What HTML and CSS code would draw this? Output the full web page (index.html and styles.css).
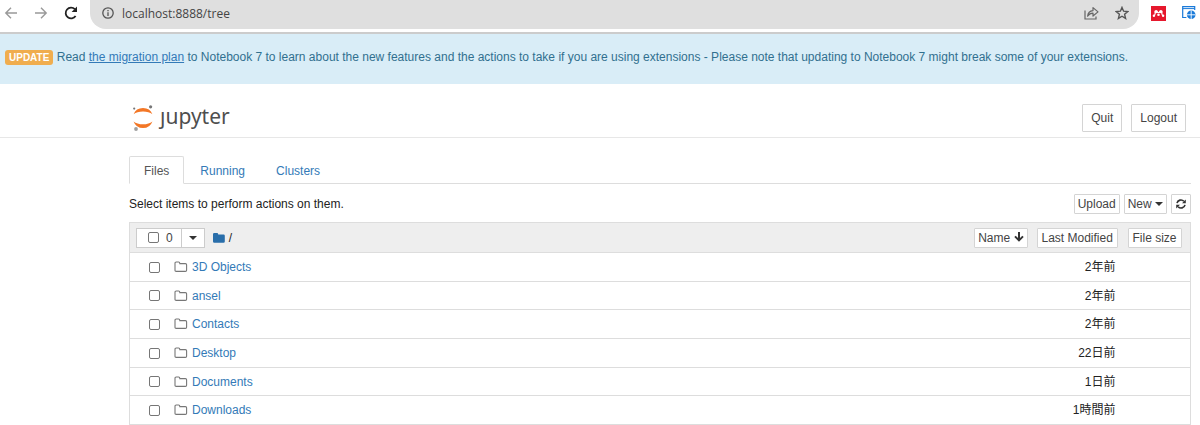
FILE: index.html
```html
<!DOCTYPE html>
<html lang="en">
<head>
    <meta charset="UTF-8">
    <title>Home Page - Select or create a notebook</title>
    <link rel="stylesheet" href="styles.css">
</head>
<body>
    <svg class="defs" width="0" height="0" aria-hidden="true">
        <symbol id="folder" viewBox="0 0 14 12">
            <path d="M1 2.2Q1 1 2.2 1H4.6Q5.8 1 5.8 2.2V2.6H11.4Q12.6 2.6 12.6 3.8V9.2Q12.6 10.4 11.4 10.4H2.2Q1 10.4 1 9.2Z" fill="none" stroke="#777" stroke-width="1.1"/>
        </symbol>
    </svg>

    <div class="browser-bar">
        <button class="nav-btn" aria-label="Back">
            <svg width="14" height="14" viewBox="0 0 14 14" fill="none" stroke="#999" stroke-width="1.4"><path d="M13 7H2M7 1.8L1.8 7L7 12.2"/></svg>
        </button>
        <button class="nav-btn" aria-label="Forward">
            <svg width="14" height="14" viewBox="0 0 14 14" fill="none" stroke="#999" stroke-width="1.4"><path d="M1 7H12M7 1.8L12.2 7L7 12.2"/></svg>
        </button>
        <button class="nav-btn" aria-label="Reload">
            <svg width="14" height="14" viewBox="0 0 14 14"><path d="M11.6 10A5.4 5.4 0 1 1 10.9 3.2" fill="none" stroke="#222" stroke-width="1.8"/><path d="M13 .6V6H7.6Z" fill="#222"/></svg>
        </button>
        <div class="address">
            <svg width="12" height="12" viewBox="0 0 12 12" fill="none" stroke="#555"><circle cx="6" cy="6" r="5.2" stroke-width="1.3"/><path d="M6 5.2V9M6 3V4.3" stroke-width="1.3"/></svg>
            <input type="text" value="localhost:8888/tree" aria-label="Address">
            <button class="nav-btn" aria-label="Share">
                <svg width="15" height="14" viewBox="0 0 15 14" fill="none" stroke="#666" stroke-width="1.2"><path d="M1 4.5V13H12V10.5"/><path d="M3.6 10.2C4 6.6 6 4.8 9 4.6V1.6L14 5.9L9 10V7.2C6.6 7.2 5 8.2 3.6 10.2Z" stroke-linejoin="round"/></svg>
            </button>
            <button class="nav-btn" aria-label="Bookmark">
                <svg width="14" height="14" viewBox="0 0 14 14" fill="none" stroke="#555" stroke-width="1.4"><path d="M7 1.4L8.6 5.2L12.8 5.6L9.6 8.3L10.6 12.4L7 10.2L3.4 12.4L4.4 8.3L1.2 5.6L5.4 5.2Z"/></svg>
            </button>
        </div>
        <button class="nav-btn" aria-label="Mendeley">
            <svg width="15" height="15" viewBox="0 0 15 15"><rect width="15" height="15" fill="#e6182d"/><g fill="#fff"><circle cx="5.1" cy="5.6" r="1.7"/><circle cx="9.9" cy="5.6" r="1.7"/><circle cx="7.5" cy="8.7" r="1.3"/><circle cx="2.9" cy="9.8" r="1.2"/><circle cx="12.1" cy="9.8" r="1.2"/></g><path d="M3.4 9.6Q4.4 8.6 4.2 6M11.6 9.6Q10.6 8.6 10.8 6M5.8 5.8Q7.5 7.2 9.2 5.8" fill="none" stroke="#fff" stroke-width="1.2"/></svg>
        </button>
        <button class="nav-btn" aria-label="Web extension">
            <svg width="14" height="14" viewBox="0 0 14 14"><path d="M4.4 11.5H.7V.7H12.7V4" fill="none" stroke="#1a7ad9" stroke-width="1.2"/><path d="M.7 2.6H12.7" stroke="#1a7ad9"/><circle cx="9.2" cy="8.8" r="4.3" fill="#1a7ad9"/><path d="M9.2 4.5V13M5 8.8H13.4" stroke="#fff" stroke-width=".9"/></svg>
        </button>
    </div>

    <div class="update-banner">
        <span class="label">UPDATE</span>
        Read <a href="#">the migration plan</a> to Notebook 7 to learn about the new features and the actions to take if you are using extensions - Please note that updating to Notebook 7 might break some of your extensions.
    </div>

    <header class="header">
        <a class="logo" href="#" aria-label="Jupyter">
            <svg width="22" height="26" viewBox="0 0 22 26">
                <path d="M1.6 9.2Q4 3 11 3T20.4 9.2Q17 6.6 11 6.6T1.6 9.2Z" fill="#f37726"/>
                <path d="M1.6 16.4Q5 19.2 11 19.2T20.4 16.4Q18 23 11 23T1.6 16.4Z" fill="#f37726"/>
                <circle cx="18.6" cy="1.8" r="1.6" fill="#767677"/>
                <circle cx="2.2" cy="3.6" r="1.1" fill="#767677"/>
                <circle cx="4" cy="24" r="1.9" fill="#9e9e9e"/>
            </svg>
            <span>ȷupyter</span>
        </a>
        <div class="header-buttons">
            <button class="btn">Quit</button>
            <button class="btn">Logout</button>
        </div>
    </header>

    <main class="content">
        <nav class="tabs">
            <a class="active" href="#">Files</a>
            <a href="#">Running</a>
            <a href="#">Clusters</a>
        </nav>

        <div class="toolbar">
            <span>Select items to perform actions on them.</span>
            <div class="toolbar-buttons">
                <button class="btn btn-xs">Upload</button>
                <button class="btn btn-xs">New <i class="caret"></i></button>
                <button class="btn btn-xs refresh" aria-label="Refresh">
                    <svg width="10" height="10" viewBox="0 0 10 10"><path d="M1 4.2A4 4 0 0 1 7.9 2.3M9 5.8A4 4 0 0 1 2.1 7.7" fill="none" stroke="#333" stroke-width="1.6"/><path d="M9.8 .4V4.2H6ZM.2 9.6V5.8H4Z" fill="#333"/></svg>
                </button>
            </div>
        </div>

        <table class="file-list">
            <thead>
                <tr>
                    <th>
                        <div class="list-head">
                            <div class="select-group">
                                <label><input type="checkbox" aria-label="Select all"> 0</label>
                                <button aria-label="Select by type"><i class="caret"></i></button>
                            </div>
                            <a class="crumb" href="#" aria-label="Home folder">
                                <svg width="12" height="10" viewBox="0 0 12 10"><path d="M0 1.2Q0 0 1.2 0H4Q5.2 0 5.2 1.2V1.6H10.6Q11.8 1.6 11.8 2.8V8.6Q11.8 9.8 10.6 9.8H1.2Q0 9.8 0 8.6Z" fill="#296eaa"/></svg>
                            </a>
                            <span>/</span>
                            <button class="btn btn-xs sort-name">Name <svg width="10" height="10" viewBox="0 0 10 10" fill="none" stroke="#333" stroke-width="2"><path d="M5 0V8M1 4.4L5 8.4L9 4.4"/></svg></button>
                        </div>
                    </th>
                    <th class="modified"><button class="btn btn-xs btn-sort">Last Modified</button></th>
                    <th class="size"><button class="btn btn-xs btn-sort">File size</button></th>
                </tr>
            </thead>
            <tbody>
                <tr>
                    <td><div class="item"><input type="checkbox" aria-label="Select 3D Objects"><svg width="14" height="12"><use href="#folder"/></svg><a href="#">3D Objects</a></div></td>
                    <td class="modified">2年前</td>
                    <td></td>
                </tr>
                <tr>
                    <td><div class="item"><input type="checkbox" aria-label="Select ansel"><svg width="14" height="12"><use href="#folder"/></svg><a href="#">ansel</a></div></td>
                    <td class="modified">2年前</td>
                    <td></td>
                </tr>
                <tr>
                    <td><div class="item"><input type="checkbox" aria-label="Select Contacts"><svg width="14" height="12"><use href="#folder"/></svg><a href="#">Contacts</a></div></td>
                    <td class="modified">2年前</td>
                    <td></td>
                </tr>
                <tr>
                    <td><div class="item"><input type="checkbox" aria-label="Select Desktop"><svg width="14" height="12"><use href="#folder"/></svg><a href="#">Desktop</a></div></td>
                    <td class="modified">22日前</td>
                    <td></td>
                </tr>
                <tr>
                    <td><div class="item"><input type="checkbox" aria-label="Select Documents"><svg width="14" height="12"><use href="#folder"/></svg><a href="#">Documents</a></div></td>
                    <td class="modified">1日前</td>
                    <td></td>
                </tr>
                <tr>
                    <td><div class="item"><input type="checkbox" aria-label="Select Downloads"><svg width="14" height="12"><use href="#folder"/></svg><a href="#">Downloads</a></div></td>
                    <td class="modified">1時間前</td>
                    <td></td>
                </tr>
            </tbody>
        </table>
    </main>
</body>
</html>
```
FILE: styles.css
```css
* {
    box-sizing: border-box;
}

body {
    margin: 0;
    background: #fff;
    color: #222;
    font-family: "Liberation Sans", Arial, "Noto Sans CJK JP", sans-serif;
    font-size: 12px;
    line-height: 16px;
}

a {
    color: #337ab7;
    text-decoration: none;
}

button,
input {
    font: inherit;
}

svg {
    display: block;
    flex: none;
}

.defs {
    position: absolute;
}

/* Browser bar */
.browser-bar {
    display: flex;
    align-items: flex-start;
    gap: 16px;
    height: 34px;
    padding: 0 4px;
    border-bottom: 2px solid #ccc;
}

.nav-btn {
    height: 26px;
    padding: 0;
    border: none;
    background: none;
}

.address {
    flex: 1;
    display: flex;
    align-items: flex-start;
    gap: 8px;
    height: 29px;
    margin: 0 -4px;
    padding: 0 10px 0 12px;
    border-radius: 0 0 16px 16px;
    background: #dfdfdf;
}

.address > svg {
    margin-top: 7px;
}

.address input {
    flex: 1;
    height: 26px;
    padding: 0;
    border: none;
    background: none;
    color: #444;
    font-family: "Open Sans", sans-serif;
}

.address .nav-btn + .nav-btn {
    margin-left: 8px;
}

/* Update banner */
.update-banner {
    padding: 15px 5px 19px;
    background: #d9edf7;
    color: #31708f;
}

.update-banner a {
    text-decoration: underline;
}

.label {
    display: inline-block;
    padding: 0 4px;
    border-radius: 3px;
    background: #f0ad4e;
    color: #fff;
    font-size: 10px;
    font-weight: bold;
    line-height: 15px;
}

/* Header */
.header {
    display: flex;
    align-items: center;
    justify-content: space-between;
    height: 54px;
    padding: 14px 14px 0 132px;
    border-bottom: 1px solid #e7e7e7;
}

.logo {
    display: flex;
    align-items: center;
    gap: 6px;
    color: #4e4e4e;
    font-family: "Noto Sans", sans-serif;
    font-size: 21px;
    line-height: 22px;
}

.logo span {
    padding-bottom: 4px;
}

.header-buttons,
.toolbar-buttons {
    display: flex;
    gap: 9px;
}

.btn {
    height: 28px;
    padding: 0 8px;
    border: 1px solid #d4d4d4;
    border-radius: 1px;
    background: #fff;
    color: #444;
    white-space: nowrap;
}

/* Files page */
.content {
    margin: 18px 9px 0 129px;
}

.tabs {
    display: flex;
    gap: 1px;
    border-bottom: 1px solid #ddd;
}

.tabs a {
    margin-bottom: -1px;
    padding: 6px 14px 4px;
    border: 1px solid transparent;
}

.tabs .active {
    border-color: #ddd;
    border-bottom-color: #fff;
    border-radius: 2px 2px 0 0;
    background: #fff;
    color: #555;
}

.toolbar {
    display: flex;
    align-items: center;
    justify-content: space-between;
    padding: 10px 0 8px;
}

.toolbar-buttons {
    gap: 4px;
}

.btn-xs {
    height: 20px;
    padding: 0 3px;
}

.btn-sort {
    padding: 0 4px;
}

.refresh {
    padding: 0 4px;
}

.caret {
    display: inline-block;
    border: 4px solid transparent;
    border-top-color: #333;
    border-bottom: none;
    vertical-align: 2px;
}

.file-list {
    width: 100%;
    border: 1px solid #ddd;
    border-collapse: collapse;
}

.file-list tr {
    height: 29px;
    border-bottom: 1px solid #ddd;
}

.file-list tbody tr:nth-child(3n + 2) {
    height: 28px;
}

.file-list thead tr {
    height: 30px;
    background: #eee;
}

.file-list th,
.file-list td {
    padding: 0;
    font-weight: normal;
    text-align: left;
}

.file-list .modified {
    width: 99px;
    padding-left: 8px;
}

.file-list td.modified {
    padding-right: 12px;
    text-align: right;
}

.file-list .size {
    width: 63px;
}

.list-head {
    display: flex;
    align-items: center;
    padding: 0 1px 0 6px;
}

.list-head .btn {
    margin-left: auto;
}

.sort-name svg {
    display: inline-block;
}

.select-group {
    display: flex;
    height: 20px;
    border: 1px solid #ccc;
    background: #fff;
}

.select-group label {
    display: flex;
    align-items: center;
    gap: 7px;
    padding: 0 8px 0 11px;
    color: #444;
}

.select-group button {
    width: 23px;
    padding: 0;
    border: none;
    border-left: 1px solid #ccc;
    background: #fff;
}

.crumb {
    margin: 0 4px 0 8px;
}

input[type="checkbox"] {
    appearance: none;
    width: 11px;
    height: 11px;
    margin: 0;
    border: 1px solid #767676;
    border-radius: 2px;
    background: #fff;
}

.item {
    display: flex;
    align-items: center;
    padding-left: 19px;
}

.item svg {
    margin: 0 4px 0 14px;
}
```
